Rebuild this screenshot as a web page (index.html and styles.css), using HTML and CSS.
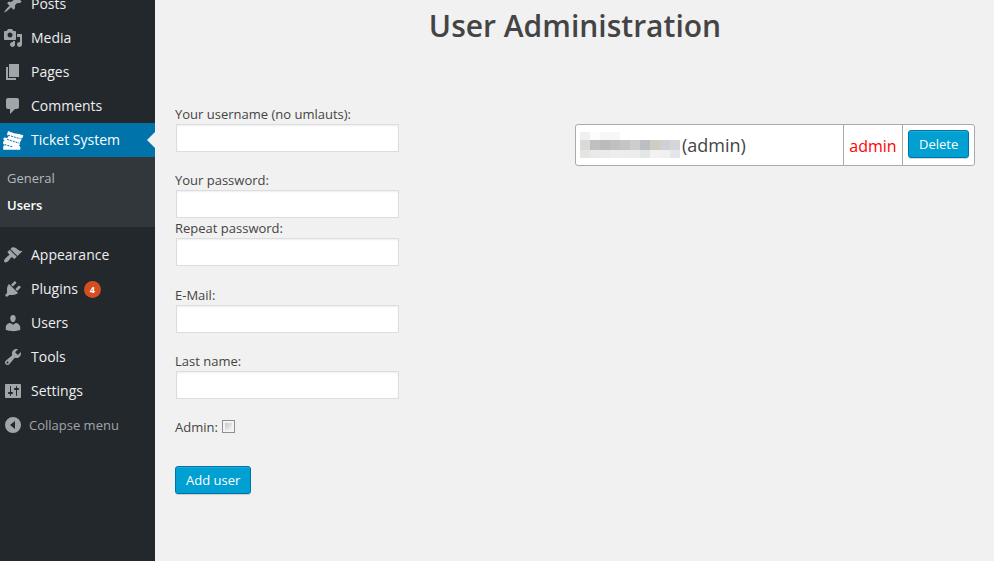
FILE: index.html
```html
<!DOCTYPE html>
<html lang="en">
<head>
<meta charset="utf-8">
<title>User Administration</title>
<link rel="stylesheet" href="styles.css">
</head>
<body>
<div class="layout">
  <nav class="sidebar">
    <a class="item"><svg class="icon" viewBox="0 0 20 20"><path d="M10.44 3.02l1.82-1.82 6.36 6.35-1.83 1.82c-1.05-.68-2.48-.57-3.41.36l-.75.75c-.92.93-1.04 2.35-.35 3.41l-1.83 1.82-2.41-2.41-2.8 2.79c-.42.42-3.38 2.71-3.8 2.29s1.86-3.39 2.28-3.81l2.79-2.79L4.1 9.36l1.83-1.82c1.05.69 2.48.57 3.4-.36l.75-.75c.93-.92 1.05-2.35.36-3.41z"/></svg><span>Posts</span></a>
    <a class="item"><svg class="icon" viewBox="0 0 20 20"><path d="M13 11V4c0-.55-.45-1-1-1h-1.67L9 1H5L3.67 3H2c-.55 0-1 .45-1 1v7c0 .55.45 1 1 1h10c.55 0 1-.45 1-1zM7 4.5c1.38 0 2.5 1.12 2.5 2.5S8.38 9.5 7 9.5 4.5 8.38 4.5 7 5.62 4.5 7 4.5zM14 6h5v10.5c0 1.38-1.12 2.5-2.5 2.5S14 17.88 14 16.5s1.12-2.5 2.5-2.5c.17 0 .34.02.5.05V9h-3V6zm-4 8.05V13h2v3.5c0 1.38-1.12 2.5-2.5 2.5S7 17.88 7 16.5 8.12 14 9.5 14c.17 0 .34.02.5.05z"/></svg><span>Media</span></a>
    <a class="item"><svg class="icon" viewBox="0 0 20 20"><path d="M6 15V2h10v13H6zm-1 1h8v2H3V5h2v11z"/></svg><span>Pages</span></a>
    <a class="item"><svg class="icon" viewBox="0 0 20 20"><path d="M5 2h9c1.1 0 2 .9 2 2v7c0 1.1-.9 2-2 2h-2l-5 5v-5H5c-1.1 0-2-.9-2-2V4c0-1.1.9-2 2-2z"/></svg><span>Comments</span></a>
    <a class="item current"><svg class="icon" viewBox="0 0 20 20"><path d="M5 1L11 3.200 16 4 20.300 5.200 19.800 7.500 18.300 8.300 18.500 10 17 12 17.200 14 16 15.500 17.300 17V19.800H.2V16.500L1.500 15.300.2 14V11.500L1.700 10.500.2 9.200 1 7.500 4.200 8 5.500 6.500 4 4.500z"/><path class="perforation" d="M5 5.200L17.500 8.800M4 9.300L16.500 13.300M1.500 14.500L10 17"/></svg><span>Ticket System</span></a>
    <div class="submenu">
      <a>General</a>
      <a class="active">Users</a>
    </div>
    <a class="item"><svg class="icon" viewBox="0 0 20 20"><path d="M14.480 11.060L7.410 3.990l1.500-1.500c.5-.56 2.300-.47 3.510.32 1.210.8 1.430 1.280 2.910 2.100 1.180.64 2.450 1.260 4.450.85zm-.71.71L6.700 4.700 4.930 6.470c-.39.39-.39 1.020 0 1.410l1.060 1.060c.39.39.39 1.030 0 1.420-.6.6-1.430 1.110-2.210 1.690-.35.26-.7.53-1.010.84C1.430 14.230.4 16.080 1.400 17.070c.99 1 2.840-.03 4.180-1.360.31-.31.58-.66.85-1.020.57-.78 1.080-1.610 1.690-2.210.39-.39 1.020-.39 1.410 0l1.060 1.060c.39.39 1.020.39 1.410 0z"/></svg><span>Appearance</span></a>
    <a class="item"><svg class="icon" viewBox="0 0 20 20"><path d="M13.110 4.360L9.870 7.600 8 5.730l3.240-3.240c.35-.34 1.050-.2 1.560.32.52.51.66 1.210.31 1.550zm-8 1.770l.91-1.120 9.010 9.010-1.190.84c-.71.71-2.630 1.160-3.820 1.160H6.140L4.900 17.260c-.59.59-1.540.59-2.120 0-.59-.58-.59-1.530 0-2.120l1.240-1.240v-3.880c0-1.130.4-3.190 1.090-3.890zm7.260 3.970l3.240-3.240c.34-.35 1.040-.21 1.550.31.52.51.66 1.210.31 1.550l-3.240 3.250z"/></svg><span>Plugins</span><b class="count">4</b></a>
    <a class="item"><svg class="icon" viewBox="0 0 20 20"><path d="M10 9.250c-2.270 0-2.730-3.440-2.730-3.440C7 4.020 7.820 2 9.970 2c2.160 0 2.980 2.020 2.710 3.810 0 0-.41 3.440-2.680 3.440zm0 2.570L12.720 10c2.390 0 4.520 2.330 4.520 4.530v2.490s-3.650 1.130-7.240 1.130c-3.650 0-7.240-1.130-7.240-1.130v-2.490c0-2.250 1.940-4.480 4.470-4.480z"/></svg><span>Users</span></a>
    <a class="item"><svg class="icon" viewBox="0 0 20 20"><path d="M16.680 9.770c-1.340 1.340-3.300 1.670-4.950.99l-5.410 6.520c-.99.99-2.590.99-3.580 0s-.99-2.590 0-3.570l6.520-5.420c-.68-1.650-.35-3.610.99-4.950 1.280-1.280 3.120-1.620 4.720-1.060l-2.890 2.890 2.820 2.820 2.860-2.870c.53 1.580.18 3.390-1.080 4.650zM3.810 16.210c.4.390 1.040.39 1.430 0 .4-.4.4-1.040 0-1.430-.39-.4-1.030-.4-1.430 0-.39.39-.39 1.030 0 1.430z"/></svg><span>Tools</span></a>
    <a class="item"><svg class="icon" viewBox="0 0 20 20"><path d="M18 16V4c0-.55-.45-1-1-1H3c-.55 0-1 .45-1 1v12c0 .55.45 1 1 1h14c.55 0 1-.45 1-1zM8 11h1c.55 0 1 .45 1 1s-.45 1-1 1H8v1.500c0 .28-.22.5-.5.5s-.5-.22-.5-.5V13H6c-.55 0-1-.45-1-1s.45-1 1-1h1V5.500c0-.28.22-.5.5-.5s.5.22.5.5V11zm5-2h-1c-.55 0-1-.45-1-1s.45-1 1-1h1V5.500c0-.28.22-.5.5-.5s.5.22.5.5V7h1c.55 0 1 .45 1 1s-.45 1-1 1h-1v5.500c0 .28-.22.5-.5.5s-.5-.22-.5-.5V9z"/></svg><span>Settings</span></a>
    <a class="item collapse"><svg class="icon" viewBox="0 0 20 20"><path fill-rule="evenodd" d="M10 2a8 8 0 1 0 0 16a8 8 0 0 0 0-16zM12 6v8L7 10z"/></svg><span>Collapse menu</span></a>
  </nav>
  <main class="content">
    <h1>User Administration</h1>
    <div class="columns">
      <form class="form">
        <label class="field"><span>Your username (no umlauts):</span><input type="text"></label>
        <label class="field tight"><span>Your password:</span><input type="password"></label>
        <label class="field last"><span>Repeat password:</span><input type="password"></label>
        <label class="field"><span>E-Mail:</span><input type="text"></label>
        <label class="field"><span>Last name:</span><input type="text"></label>
        <label class="check"><span>Admin:</span><input type="checkbox"></label>
        <button class="button" type="button">Add user</button>
      </form>
      <div class="user">
        <div class="name"><span class="mosaic"><i class="c1"></i><i class="c2"></i><i class="c3"></i></span><span>(admin)</span></div>
        <div class="role">admin</div>
        <div class="action"><button class="button" type="button">Delete</button></div>
      </div>
    </div>
  </main>
</div>
</body>
</html>
```
FILE: styles.css
```css
* { box-sizing: border-box; }
body {
  margin: 0;
  height: 561px;
  overflow: hidden;
  background: #f1f1f1;
  color: #444;
  font: 13px/18px "Open Sans", sans-serif;
}
.layout { display: flex; height: 561px; }
.sidebar {
  width: 155px;
  flex: none;
  background: #23282d;
  margin-top: -13px;
  height: 574px;
}
.item {
  display: flex;
  align-items: center;
  height: 34px;
  padding-left: 3px;
  color: #eee;
  font-size: 14px;
  position: relative;
}
.icon { width: 20px; height: 20px; margin-right: 8px; fill: #a0a5aa; flex: none; overflow: visible; }
.current { background: #0073aa; color: #fff; }
.current .icon { fill: #fff; }
.current .perforation { fill: none; stroke: #0073aa; stroke-width: 1; stroke-dasharray: 2 1; }
.current::after {
  content: "";
  position: absolute;
  right: 0;
  top: 9px;
  border: 8px solid transparent;
  border-left: 0;
  border-right-color: #f1f1f1;
}
.submenu {
  height: 70px;
  margin-bottom: 11px;
  padding: 8px 7px;
  background: #32373c;
  color: #b4b9be;
}
.submenu a { display: block; height: 27px; line-height: 27px; }
.submenu .active { color: #fff; font-weight: 600; }
.count {
  width: 17px;
  height: 17px;
  margin-left: 6px;
  border-radius: 50%;
  background: #d54e21;
  color: #fff;
  font-size: 9px;
  font-weight: 700;
  line-height: 17px;
  text-align: center;
}
.collapse { color: #a0a5aa; font-size: 13px; }
.collapse .icon { margin-right: 6px; }
.content { flex: 1; padding: 0 19px 0 20px; }
h1 {
  margin: 6px 0 59px;
  font-size: 30px;
  line-height: 40px;
  font-weight: 600;
  text-align: center;
}
.columns { display: flex; align-items: flex-start; justify-content: space-between; }
.form { width: 225px; }
.field { display: block; margin-bottom: 18px; height: 48px; }
.field.tight { margin-bottom: 0; }
.field.last { margin-bottom: 19px; }
.field span { display: block; height: 18px; }
.field input {
  display: block;
  width: 223px;
  height: 28px;
  margin: 1px;
  border: 1px solid #ddd;
  background: #fff;
  box-shadow: inset 0 1px 2px rgba(0, 0, 0, .07);
}
.check { display: flex; align-items: center; height: 18px; }
.check input {
  appearance: none;
  width: 13px;
  height: 13px;
  margin: 0 0 1px 4px;
  padding: 2px;
  border: 1px solid #8e8f8f;
  background: linear-gradient(135deg, #c3c8cf, #f6f6f6) content-box no-repeat, #f4f4f4;
}
.button {
  height: 28px;
  padding: 1px 10px 0;
  border: 1px solid #0073aa;
  border-radius: 3px;
  background: #00a0d2;
  box-shadow: inset 0 1px 0 rgba(120, 200, 230, .3), 0 1px 0 rgba(0, 0, 0, .15);
  color: #fff;
  font: 13px/25px "Open Sans", sans-serif;
}
.form .button { display: block; margin-top: 30px; }
.user {
  display: flex;
  width: 400px;
  height: 42px;
  margin-top: 19px;
  border: 1px solid #aaa;
  border-radius: 3px;
  background: #fff;
}
.name { display: flex; flex: 1; align-items: center; padding-left: 4px; font-size: 18px; }
.mosaic { width: 100px; height: 26px; margin-right: 2px; display: grid; grid-template-rows: 8px 10px 8px; }
.c1 { background: linear-gradient(90deg, #f0f0f0 10%, #fcfcfc 10% 20%, #f7f7f7 20% 40%, #fff 40%); }
.c2 { background: linear-gradient(90deg, #dadad8 10%, #c0c0c1 10% 20%, #bbbbbe 20% 30%, #c0c0c0 30% 40%, #c4c4c2 40% 50%, #cdcdcd 50% 60%, #bbbfbf 60% 70%, #cfccc4 70% 80%, #ced0d6 80% 90%, #d4d6d9 90%); }
.c3 { background: linear-gradient(90deg, #e6e5e2 10%, #eaeaea 10% 20%, #ebebec 20% 30%, #ededed 30% 40%, #ededeb 40% 50%, #ececec 50% 60%, #e2e6e6 60% 70%, #f3f2ef 70% 80%, #f0f0f1 80% 90%, #e5e6e9 90%); }
.role {
  display: flex;
  align-items: center;
  justify-content: center;
  width: 60px;
  border: solid #aaa;
  border-width: 0 1px;
  color: #f00;
  font-size: 16px;
  padding-top: 2px;
}
.action { width: 71px; padding: 5px 0 0 5px; }
```
